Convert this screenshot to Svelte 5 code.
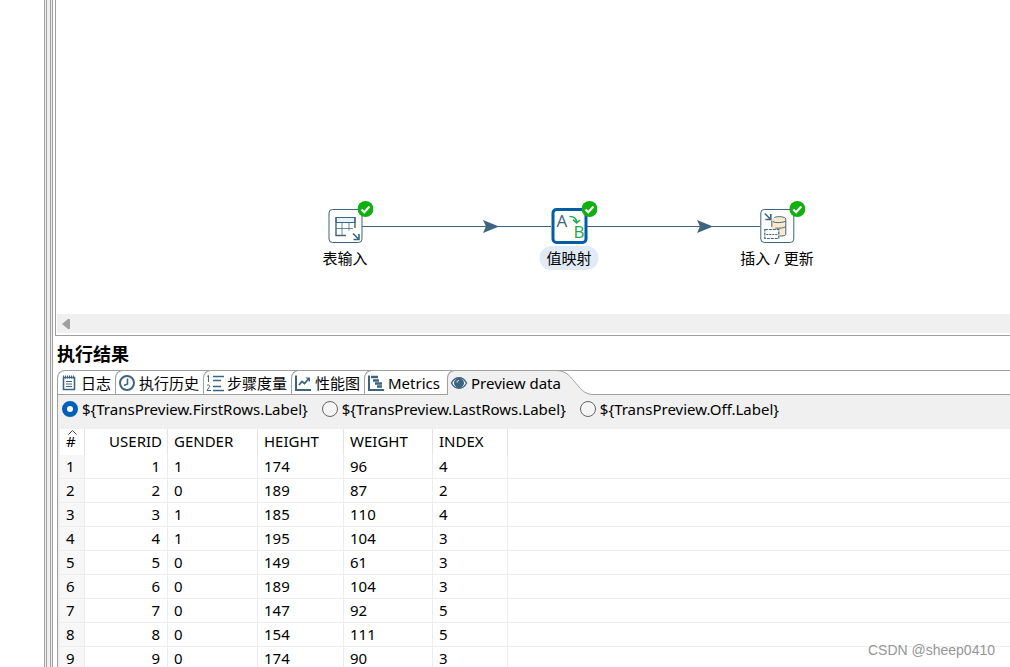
<script lang="ts">
  type Tab = { id: string; label: string; width: number };

  const tabs: Tab[] = [
    { id: "log", label: "日志", width: 58 },
    { id: "history", label: "执行历史", width: 88 },
    { id: "steps", label: "步骤度量", width: 88 },
    { id: "perf", label: "性能图", width: 73 },
    { id: "metrics", label: "Metrics", width: 83 },
    { id: "preview", label: "Preview data", width: 108 },
  ];

  const modes = [
    { id: "first", label: "${TransPreview.FirstRows.Label}" },
    { id: "last", label: "${TransPreview.LastRows.Label}" },
    { id: "off", label: "${TransPreview.Off.Label}" },
  ];

  // centre of each step on the canvas
  const steps = [
    { id: "input", label: "表输入", x: 289, y: 226 },
    { id: "map", label: "值映射", x: 513, y: 226 },
    { id: "upsert", label: "插入 / 更新", x: 721, y: 226 },
  ];

  const rows = [
    [1, 1, 174, 96, 4],
    [2, 0, 189, 87, 2],
    [3, 1, 185, 110, 4],
    [4, 1, 195, 104, 3],
    [5, 0, 149, 61, 3],
    [6, 0, 189, 104, 3],
    [7, 0, 147, 92, 5],
    [8, 0, 154, 111, 5],
    [9, 0, 174, 90, 3],
  ];

  let activeTab = $state("preview");
  let mode = $state("first");
  let selected = $state("map");
</script>

<div class="app">
  <aside class="side"></aside>
  <div class="sash"></div>

  <main>
    <section class="canvas">
      <svg class="hops" width="760" height="300" aria-hidden="true">
        <path d="M306 226.500H495M531 226.500H704" stroke="#3d6480" />
        <path d="M427 220l16 6.500-16 6.500 3-6.500zM641 220l16 6.500-16 6.500 3-6.500z" fill="#3d6480" />
      </svg>

      {#each steps as step}
        <button
          class="step"
          class:selected={selected === step.id}
          style="left: {step.x}px; top: {step.y}px"
          onclick={() => (selected = step.id)}
        >
          <span class="box">
            {#if step.id === "input"}
              <svg width="32" height="32" viewBox="0 0 32 32" fill="none" stroke="#3d6480">
                <path d="M6.500 7.500h19v5h-19z" fill="#e8f4fb" />
                <path d="M6.500 7v18.500h10M25.500 7v11" stroke-width="1.400" />
                <path d="M6.500 18.500h17M12.500 12.500v13M19.500 12.500v8" stroke-opacity=".75" />
                <path d="M23.500 23.500l5 5M29.500 24v5.500h-5.500" stroke-width="1.600" />
              </svg>
            {:else if step.id === "map"}
              <svg width="32" height="32" viewBox="0 0 32 32" fill="none">
                <text x="3" y="17" class="glyph a">A</text>
                <text x="20" y="28" class="glyph b">B</text>
                <path d="M16 6.500c5 0 7 1.500 7 6M19.500 9.500l3.500 3.500 3.500-3" stroke="#1da84f" stroke-width="1.600" />
              </svg>
            {:else}
              <svg width="32" height="32" viewBox="0 0 32 32" fill="none" stroke="#3d6480">
                <path d="M10.500 9v16c2 2 12 2 14 0V9c-2-2-12-2-14 0z" fill="#fde9c9" stroke="none" />
                <path d="M10.500 17V10.500M13 7.500c3-1.500 11-1 11.500 1.500v15.500c-1 1.500-4 1.500-6 1.500M11.500 11.500c3 2 11 1 13-.5M14 18c4 .5 9 0 10.500-1.500" />
                <path d="M3.500 19.500h14v9h-14z" fill="#fff" stroke-width="1.200" stroke-dasharray="3 1" />
                <path d="M5 24.500h11" stroke-dasharray="2 1" />
                <path d="M3.500 3.500l6 6M9.500 4v5.500H4" stroke-width="1.600" />
              </svg>
            {/if}
          </span>
          <svg class="badge" width="16" height="16" viewBox="0 0 16 16" aria-hidden="true">
            <circle cx="8" cy="8" r="8" fill="#10b010" />
            <path d="M4 8.500l2.800 2.700L12 5.500" fill="none" stroke="#fff" stroke-width="2.200" />
          </svg>
          <span class="caption">{step.label}</span>
        </button>
      {/each}

      <div class="scrollbar">
        <button class="scroll-left" aria-label="Scroll left">
          <svg width="8" height="10" viewBox="0 0 8 10"><path d="M0 5l6-5h2v10H6z" fill="#a0a0a0" /></svg>
        </button>
      </div>
    </section>

    <section class="results">
      <h2>执行结果</h2>

      <div class="folder">
        <div class="tabs" role="tablist">
          {#each tabs as tab}
            <button
              class="tab"
              class:active={activeTab === tab.id}
              role="tab"
              aria-selected={activeTab === tab.id}
              style="width: {tab.width}px"
              onclick={() => (activeTab = tab.id)}
            >
              <svg width="18" height="18" viewBox="0 0 18 18" fill="none" stroke="#3d6480">
                {#if tab.id === "log"}
                  <path d="M3.500 3.500h11v12h-11z" stroke-width="1.600" />
                  <path d="M3 3h12" stroke-width="3" stroke-dasharray="1 1" />
                  <path d="M6 7.500h6M6 10h6M6 12.500h6" />
                {:else if tab.id === "history"}
                  <circle cx="9" cy="9" r="7" stroke-width="2" />
                  <path d="M9.500 4.500V10L6 11.500" stroke-width="1.600" />
                {:else if tab.id === "steps"}
                  <path d="M7 2.500h11M7 6.500h8M7 12.500h8M7 16.500h11" stroke-width="1.300" />
                  <path d="M1 2.500l1.500-1V8M1 11.500c1.500-1.500 3.500 0 2 2L1 16.500h4" />
                {:else if tab.id === "perf"}
                  <path d="M2 1.500v14.500h15" stroke-width="2" />
                  <path d="M5 11l3-3.500 2.500 2 4-4.500" stroke-width="1.800" />
                  <path d="M11.500 3.500H16V8z" fill="#3d6480" stroke="none" />
                {:else if tab.id === "metrics"}
                  <path d="M2 1.500v14.500h15" stroke-width="2" />
                  <path d="M4 3h7M6 6.500h6M8 9.500h7M10 12.500h5" stroke-width="2.500" />
                {:else}
                  <path d="M1.500 9c3.500-7 11.500-7 15 0-3.500 7-11.500 7-15 0z" fill="#fff" stroke-width="1.400" />
                  <circle cx="9" cy="9" r="4.500" fill="#3d6480" />
                  <path d="M7 8.500c0-1.500 1-2 2-2" stroke="#fff" />
                {/if}
              </svg>
              <span>{tab.label}</span>
            </button>
          {/each}
          <svg class="slope" width="38" height="25" viewBox="0 0 38 25" aria-hidden="true">
            <path d="M0 .5C10 .5 13 4 19 11S29 24.500 38 24.500V25H0z" fill="#f0f0f0" />
            <path d="M0 .5C10 .5 13 4 19 11S29 24.500 38 24.500" fill="none" stroke="#a0a0a0" />
          </svg>
        </div>

        <div class="modes">
          {#each modes as m}
            <label>
              <input type="radio" name="mode" value={m.id} bind:group={mode} />
              <span>{m.label}</span>
            </label>
          {/each}
        </div>

        <table>
          <colgroup>
            <col class="c-num" />
            <col class="c-user" />
            <col class="c-gender" />
            <col class="c-height" />
            <col class="c-weight" />
            <col class="c-index" />
            <col />
          </colgroup>
          <thead>
            <tr>
              <th class="num">
                <svg class="sort" width="9" height="5" viewBox="0 0 9 5" aria-hidden="true">
                  <path d="M.5 4.500l4-4 4 4" fill="none" stroke="#444" />
                </svg>
                #
              </th>
              <th class="user">USERID</th>
              <th>GENDER</th>
              <th>HEIGHT</th>
              <th>WEIGHT</th>
              <th>INDEX</th>
              <th class="rest"></th>
            </tr>
          </thead>
          <tbody>
            {#each rows as [id, gender, height, weight, index], i}
              <tr>
                <td class="num">{i + 1}</td>
                <td class="user">{id}</td>
                <td>{gender}</td>
                <td>{height}</td>
                <td>{weight}</td>
                <td>{index}</td>
                <td class="rest"></td>
              </tr>
            {/each}
          </tbody>
        </table>
      </div>
    </section>
  </main>

  <div class="watermark">CSDN @sheep0410</div>
</div>

<style>
  :global(body) {
    background: #fff;
    overflow: hidden;
  }

  .app {
    position: relative;
    display: flex;
    height: 100vh;
    overflow: hidden;
    color: #000;
    font: 15px/20px "Noto Sans", "Noto Sans CJK SC", sans-serif;
  }

  button {
    padding: 0;
    border: 0;
    background: none;
    color: inherit;
    font: inherit;
    white-space: nowrap;
  }

  .side {
    flex: 0 0 44px;
  }

  .sash {
    box-sizing: border-box;
    flex: 0 0 9px;
    border: 3px double #a0a0a0;
    border-width: 0 3px;
    background: #f0f0f0;
  }

  main {
    display: flex;
    flex: 1;
    flex-direction: column;
    min-width: 0;
    padding-left: 2px;
  }

  .canvas {
    position: relative;
    box-sizing: border-box;
    display: flex;
    flex: 0 0 336px;
    flex-direction: column;
    justify-content: flex-end;
    border-left: 1px solid #a0a0a0;
    border-bottom: 1px solid #a0a0a0;
  }

  .hops {
    position: absolute;
    left: 0;
    top: 0;
  }

  .step {
    position: absolute;
    display: flex;
    flex-direction: column;
    align-items: center;
    gap: 2px;
    transform: translate(-50%, -18px);
  }

  .box {
    box-sizing: border-box;
    display: flex;
    align-items: center;
    justify-content: center;
    width: 34px;
    height: 34px;
    margin: 1px;
    border: 1px solid #3d6480;
    border-radius: 4px;
    background: #fff;
  }

  .selected .box {
    width: 36px;
    height: 36px;
    margin: 0;
    border: 3px solid #005da6;
    border-radius: 5px;
  }

  .box svg {
    flex-shrink: 0;
  }

  .glyph {
    font: 17px "Open Sans", sans-serif;
  }

  .a {
    fill: #3d6480;
  }

  .b {
    fill: #1da84f;
  }

  .badge {
    position: absolute;
    left: calc(50% + 12px);
    top: -7px;
  }

  .caption {
    padding: 1px 7px;
    border-radius: 12px;
    line-height: 22px;
  }

  .selected .caption {
    background: #e1ebf5;
  }

  .scrollbar {
    display: flex;
    height: 19px;
    margin: 0 0 2px 1px;
    background: #f0f0f0;
  }

  .scroll-left {
    display: flex;
    align-items: center;
    padding: 0 5px;
  }

  h2 {
    margin: 0;
    padding: 6px 2px 4px;
    font-size: 18px;
    font-weight: 700;
    line-height: 24px;
  }

  .folder {
    margin-left: 2px;
    border-left: 1px solid #a0a0a0;
    border-top: 1px solid #a0a0a0;
    border-top-left-radius: 8px;
    background: #f0f0f0;
    overflow: hidden;
  }

  .tabs {
    display: flex;
    height: 23px;
    margin-left: -1px;
    border-bottom: 1px solid #a0a0a0;
    background: #fff;
  }

  .tab {
    box-sizing: border-box;
    display: flex;
    flex-shrink: 0;
    align-items: center;
    gap: 3px;
    height: 24px;
    margin-top: -1px;
    padding-left: 2px;
    border-left: 1px solid #a0a0a0;
    border-top: 1px solid #a0a0a0;
    border-top-left-radius: 8px;
  }

  .tab svg {
    flex-shrink: 0;
  }

  .tab.active {
    height: 25px;
    background: #f0f0f0;
  }

  .tab span {
    position: relative;
    z-index: 1;
  }

  .slope {
    flex-shrink: 0;
    margin-top: -1px;
  }

  .modes {
    display: flex;
    gap: 14px;
    height: 34px;
    padding: 0 4px;
    white-space: nowrap;
  }

  .modes label {
    display: flex;
    gap: 4px;
    height: 28px;
    align-items: center;
  }

  .modes input {
    appearance: none;
    box-sizing: border-box;
    width: 16px;
    height: 16px;
    margin: 0;
    border: 1px solid #666;
    border-radius: 50%;
    background: #f5f5f5;
  }

  .modes input:checked {
    border: 5px solid #005fb8;
    background: #fff;
  }

  table {
    width: calc(100% - 2px);
    margin-left: 2px;
    border-spacing: 0;
    table-layout: fixed;
    background: #fff;
  }

  .c-num {
    width: 25px;
  }

  .c-user {
    width: 83px;
  }

  .c-gender {
    width: 90px;
  }

  .c-height {
    width: 86px;
  }

  .c-weight {
    width: 89px;
  }

  .c-index {
    width: 75px;
  }

  th,
  td {
    box-sizing: border-box;
    height: 24px;
    padding: 0 0 2px 6px;
    border-right: 1px solid #e9eef6;
    border-bottom: 1px solid #ededed;
    font-weight: 400;
    text-align: left;
  }

  th {
    position: relative;
    height: 26px;
    border-right-color: #e2e2e2;
    border-bottom: 0;
  }

  td {
    line-height: 18px;
  }

  td.num {
    background: #f7f7f7;
  }

  .user {
    padding-right: 5px;
    text-align: right;
  }

  td.user {
    padding-right: 7px;
  }

  .rest {
    border-right: 0;
  }

  .sort {
    position: absolute;
    left: 8px;
    top: 1px;
  }

  .watermark {
    position: absolute;
    right: 15px;
    bottom: 7px;
    color: #969696;
    font: 14px/20px "Liberation Sans", sans-serif;
  }
</style>
